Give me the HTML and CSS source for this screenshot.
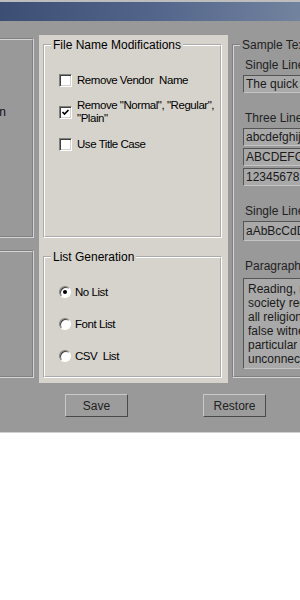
FILE: index.html
```html
<!DOCTYPE html>
<html lang="en">
<head>
  <meta charset="UTF-8" />
  <title>Font Options</title>
  <link rel="stylesheet" href="styles.css">
</head>
<body>
  <div class="titlebar"></div>
  <div class="window">
    <div class="panes">
      <div class="left-col">
        <fieldset class="group group-top dim">
          <div class="clip-label">Justification</div>
        </fieldset>
        <fieldset class="group group-bottom dim"></fieldset>
      </div>

      <div class="options-panel">
        <fieldset class="group group-top">
          <legend>File Name Modifications</legend>
          <div class="option-list checks">
            <label class="option">
              <span class="checkbox"></span>
              <span>Remove Vendor&nbsp; Name</span>
            </label>
            <label class="option">
              <span class="checkbox checked">
                <svg width="9" height="9" viewBox="0 0 9 9"><path d="M1.5 4 L3.5 6 L7.5 2" fill="none" stroke="#000" stroke-width="1.7"/></svg>
              </span>
              <span class="two-line">Remove "Normal", "Regular",<br>"Plain"</span>
            </label>
            <label class="option">
              <span class="checkbox"></span>
              <span>Use Title Case</span>
            </label>
          </div>
        </fieldset>

        <fieldset class="group group-bottom">
          <legend>List Generation</legend>
          <div class="option-list radios">
            <label class="option"><span class="radio selected"></span><span>No List</span></label>
            <label class="option"><span class="radio"></span><span>Font List</span></label>
            <label class="option"><span class="radio"></span><span>CSV&nbsp; List</span></label>
          </div>
        </fieldset>
      </div>

      <div class="sample-col">
        <fieldset class="group sample dim">
          <legend>Sample Text</legend>
          <div class="sample-label first">Single Line</div>
          <div class="field">The quick brown fox jumps over the lazy dog</div>

          <div class="sample-label">Three Line Alphabet</div>
          <div class="field">abcdefghijklmnopqrstuvwxyz</div>
          <div class="field">ABCDEFGHIJKLMNOPQRSTUVWXYZ</div>
          <div class="field">1234567890</div>

          <div class="sample-label">Single Line Mixed</div>
          <div class="field tall">aAbBcCdDeEfFgGhHiIjJ</div>

          <div class="sample-label">Paragraph Text</div>
          <div class="paragraph">
            Reading, religion and the rules of<br>
            society require that we respect<br>
            all religions and do not bear<br>
            false witness against any, in<br>
            particular of things that are<br>
            unconnected to the facts.
          </div>
        </fieldset>
      </div>
    </div>

    <div class="buttons">
      <button type="button">Save</button>
      <button type="button">Restore</button>
    </div>
  </div>
</body>
</html>
```

FILE: styles.css
```css
body {
  margin: 0;
  width: 300px;
  overflow: hidden;
  background-color: #fff;
  font-family: 'Liberation Sans', Arial, sans-serif;
  font-size: 12px;
  color: #000;
}

.titlebar {
  height: 19px;
  border-top: 2px solid #bdbdbd;
  background: linear-gradient(to right, #3c4e74, #52648a 50%, #72839f);
}

.window {
  background-color: #999;
  border-bottom: 1px solid #d0d0d0;
  box-shadow: 0 2px 0 #3c3c3c;
  height: 411px;
}

.panes {
  display: flex;
  padding-top: 14px;
}

/* group boxes */
.group {
  box-sizing: border-box;
  margin: 0;
  padding: 0;
  min-width: 0;
  border: 2px groove #fff;
}

.group.dim {
  border-color: #d4d4d4;
}

.group legend {
  margin-left: 6px;
  padding: 0 2px;
  line-height: 14px;
  white-space: nowrap;
}

.group-top {
  height: 200px;
}

.group-bottom {
  height: 128px;
  margin-top: 12px;
}

/* left, mostly hidden column */
.left-col {
  width: 39px;
  flex-shrink: 0;
  overflow: hidden;
  padding-top: 3px;
  display: flex;
  flex-direction: column;
  align-items: flex-end;
}

.left-col .group {
  width: 150px;
  margin-right: 5px;
}

.clip-label {
  margin-top: 65px;
  text-align: right;
  padding-right: 26px;
  color: #111;
  line-height: 14px;
}

/* middle options panel */
.options-panel {
  width: 189px;
  flex-shrink: 0;
  box-sizing: border-box;
  height: 348px;
  padding: 3px 6px 0 4px;
  background-color: #d6d3cc;
}

.option-list {
  display: flex;
  flex-direction: column;
  padding-left: 14px;
}

.checks {
  padding-top: 21px;
  gap: 12px;
}

.radios {
  padding-top: 21px;
  gap: 18px;
}

.option {
  display: flex;
  align-items: center;
  font-size: 11.5px;
  letter-spacing: -0.45px;
  line-height: 14px;
  white-space: nowrap;
}

.two-line {
  line-height: 13px;
}

.checkbox {
  box-sizing: border-box;
  width: 13px;
  height: 13px;
  flex-shrink: 0;
  margin-right: 5px;
  background-color: #fff;
  border: 1px solid;
  border-color: #808080 #fff #fff #808080;
  box-shadow: inset 1px 1px 0 #404040, inset -1px -1px 0 #d4d0c8;
  display: flex;
  align-items: center;
  justify-content: center;
}

.radio {
  box-sizing: border-box;
  position: relative;
  width: 12px;
  height: 12px;
  flex-shrink: 0;
  margin-right: 4px;
  border-radius: 50%;
  background-color: #fff;
  border: 1px solid;
  border-color: #808080 #fff #fff #808080;
  box-shadow: inset 1px 1px 0 #404040;
}

.radio.selected::after {
  content: '';
  position: absolute;
  left: 3px;
  top: 3px;
  width: 4px;
  height: 4px;
  border-radius: 50%;
  background-color: #000;
}

/* right sample column */
.sample-col {
  flex: 1;
  padding: 3px 0 0 4px;
}

.sample {
  width: 200px;
  height: 340px;
  color: #222;
}

.sample-label {
  line-height: 14px;
  margin: 18px 0 3px 11px;
  white-space: nowrap;
}

.sample-label.first {
  margin-top: 6px;
}

.field {
  box-sizing: border-box;
  height: 18px;
  margin: 0 0 2px 9px;
  padding: 0 2px;
  line-height: 16px;
  white-space: nowrap;
  overflow: hidden;
  color: #1a1a1a;
  background-color: #a9a9a9;
  border: 1px solid;
  border-color: #555 #c4c4c4 #c4c4c4 #555;
}

.field.tall {
  height: 20px;
  line-height: 18px;
}

.paragraph {
  box-sizing: border-box;
  height: 91px;
  margin: 5px 0 0 9px;
  padding: 3px 4px;
  line-height: 14px;
  white-space: nowrap;
  overflow: hidden;
  color: #1a1a1a;
  background-color: #a9a9a9;
  border: 1px solid;
  border-color: #555 #c4c4c4 #c4c4c4 #555;
}

/* bottom buttons */
.buttons {
  display: flex;
  gap: 75px;
  padding: 11px 0 0 65px;
}

.buttons button {
  width: 63px;
  height: 23px;
  padding: 0;
  font-family: inherit;
  font-size: 12px;
  color: #222;
  background-color: #9c9c9c;
  border: 1px solid;
  border-color: #c8c8c8 #4a4a4a #4a4a4a #c8c8c8;
}
```
